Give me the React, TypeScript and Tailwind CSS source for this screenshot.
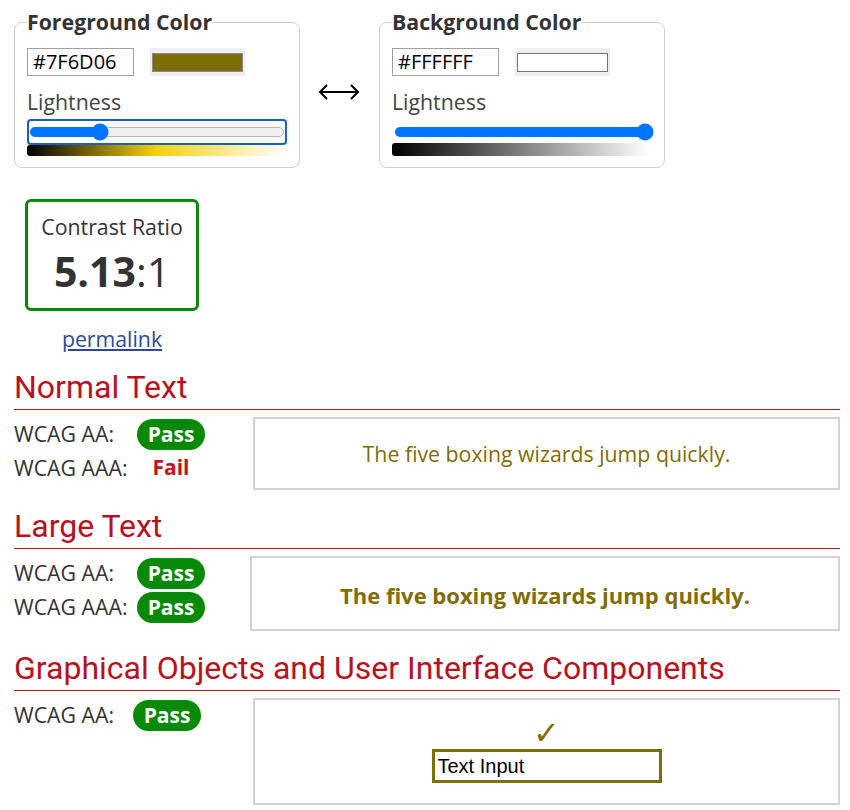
import React from "react";

function Swatch({ white }: { white?: boolean }) {
  return (
    <div className="w-[95px] h-[28px] bg-[#efefef] pt-[5px] pb-[4px] px-[2px]">
      <div
        className={
          white
            ? "h-full w-full border border-[#767676] bg-white"
            : "h-full w-full border border-[#8a8a8a] bg-[#7F6D06]"
        }
      />
    </div>
  );
}

function ColorBox({
  title,
  hex,
  white,
}: {
  title: string;
  hex: string;
  white?: boolean;
}) {
  return (
    <fieldset className="w-[285px] border border-[#cfcfcf] rounded-lg px-3 pb-[11px]">
      <legend className="text-[21.3px] font-bold leading-6 text-[#333]">{title}</legend>
      <div className="flex gap-4 mt-[14px]">
        <div className="w-[107px] h-[28px] border border-[#a0a0a0] px-[5px] text-[20px] leading-[26px] text-black">
          {hex}
        </div>
        <Swatch white={white} />
      </div>
      <div className="mt-[12px] text-[21.3px] leading-[28px] text-[#444]">Lightness</div>
      {white ? (
        <div className="mt-[3px] h-[26px] w-[260px] border-2 border-transparent flex items-center px-px">
          <div className="relative h-[10px] w-full rounded-full bg-[#0075ff]">
            <div className="absolute top-1/2 left-[250px] w-[17px] h-[17px] -translate-y-1/2 -translate-x-1/2 rounded-full bg-[#0075ff]" />
          </div>
        </div>
      ) : (
        <div className="mt-[3px] h-[26px] w-[260px] rounded border-2 border-[#1a5fc4] flex items-center px-px">
          <div className="relative h-[10px] w-full rounded-full bg-[#efefef] border border-[#b5b5b5]">
            <div className="absolute -left-px -top-px -bottom-px w-[70px] rounded-full bg-[#0075ff]" />
            <div className="absolute top-1/2 left-[69px] w-[17px] h-[17px] -translate-y-1/2 -translate-x-1/2 rounded-full bg-[#0075ff]" />
          </div>
        </div>
      )}
      {white ? (
        <div className="-mt-[2px] w-[258px] h-[13px] rounded-[3px] bg-[linear-gradient(to_right,#000,#fff)]" />
      ) : (
        <div className="w-[258px] h-[11px] rounded-l-[3px] bg-[linear-gradient(to_right,#000,#f5d00c_50%,#fff)]" />
      )}
    </fieldset>
  );
}

function Pass() {
  return (
    <div className="w-[68px] h-[31px] rounded-full bg-[#088a08] text-white font-bold text-[21px] leading-[31px] text-center">
      Pass
    </div>
  );
}

function Heading({ children }: { children: React.ReactNode }) {
  return (
    <div className="w-[826px]">
      <h2
        className="text-[32px] leading-[36px] text-[#b8121e] pb-[4px]"
        style={{ fontFamily: "Roboto, 'Liberation Sans', sans-serif" }}
      >
        {children}
      </h2>
      <div className="h-px bg-[#b8121e]" />
    </div>
  );
}

function Row({ label, children, w }: { label: string; children: React.ReactNode; w: string }) {
  return (
    <div className="flex items-center h-[34px]">
      <div className={w + " text-[21.3px] leading-[28px] text-[#333] whitespace-nowrap"}>{label}</div>
      <div className="w-[68px] flex justify-center">{children}</div>
    </div>
  );
}

export default function App() {
  return (
    <div
      className="w-[850px] h-[810px] overflow-hidden bg-white pl-[14px] pt-[10px] text-[#333]"
      style={{ fontFamily: "'Open Sans', 'Noto Sans', sans-serif" }}
    >
      <div className="flex items-center">
        <ColorBox title="Foreground Color" hex="#7F6D06" />
        <div className="w-[79px] flex justify-center pt-[6px] pr-[2px]">
          <svg width="42" height="18" viewBox="0 0 42 18" fill="none" stroke="#000" strokeWidth="2">
            <line x1="2" y1="9" x2="40" y2="9" />
            <polyline points="9,2 2,9 9,16" strokeLinejoin="miter" />
            <polyline points="33,2 40,9 33,16" strokeLinejoin="miter" />
          </svg>
        </div>
        <ColorBox title="Background Color" hex="#FFFFFF" white />
      </div>

      <div className="ml-[11px] w-[174px]">
        <div className="mt-[31px] h-[112px] border-[3px] border-[#088a08] rounded-md flex flex-col items-center pt-[11px]">
          <div className="text-[21.3px] leading-[28px] text-[#333]">Contrast Ratio</div>
          <div className="mt-[8px] text-[41px] leading-[44px] text-[#333]">
            <span className="font-bold">5.13</span>:1
          </div>
        </div>
        <div className="mt-[14px] text-center text-[21.3px] leading-[28px]">
          <a href="#" className="text-[#2c4a9c] underline underline-offset-2">permalink</a>
        </div>
      </div>

      <div className="mt-[16px]">
        <Heading>Normal Text</Heading>
        <div className="flex mt-[7px] w-[826px]">
          <div className="w-[239px]">
            <Row label="WCAG AA:" w="w-[123px]"><Pass /></Row>
            <Row label="WCAG AAA:" w="w-[123px]">
              <span className="font-bold text-[21px] text-[#c4121c]">Fail</span>
            </Row>
          </div>
          <div className="flex-1 h-[73px] border-2 border-[#d2d2d2] flex items-center justify-center text-[21.3px] text-[#7F6D06]">
            The five boxing wizards jump quickly.
          </div>
        </div>
      </div>

      <div className="mt-[18px]">
        <Heading>Large Text</Heading>
        <div className="flex mt-[7px] w-[826px]">
          <div className="w-[236px]">
            <Row label="WCAG AA:" w="w-[123px]"><Pass /></Row>
            <Row label="WCAG AAA:" w="w-[123px]"><Pass /></Row>
          </div>
          <div className="flex-1 h-[75px] border-2 border-[#d2d2d2] flex items-center justify-center pt-[3px] text-[22px] font-bold text-[#7F6D06]">
            The five boxing wizards jump quickly.
          </div>
        </div>
      </div>

      <div className="mt-[19px]">
        <Heading>Graphical Objects and User Interface Components</Heading>
        <div className="flex mt-[7px] w-[826px]">
          <div className="w-[239px]">
            <Row label="WCAG AA:" w="w-[119px]"><Pass /></Row>
          </div>
          <div className="flex-1 h-[107px] border-2 border-[#d2d2d2] flex flex-col items-center pt-[17px]">
            <div
              className="text-[32px] leading-[32px] font-bold text-[#7F6D06]"
              style={{ fontFamily: "'DejaVu Sans', sans-serif" }}
            >
              ✓
            </div>
            <div
              className="w-[230px] h-[34px] border-[3px] border-[#7F6D06] px-[3px] text-[20px] leading-[28px] text-black"
              style={{ fontFamily: "'Liberation Sans', Arial, sans-serif" }}
            >
              Text Input
            </div>
          </div>
        </div>
      </div>
    </div>
  );
}
